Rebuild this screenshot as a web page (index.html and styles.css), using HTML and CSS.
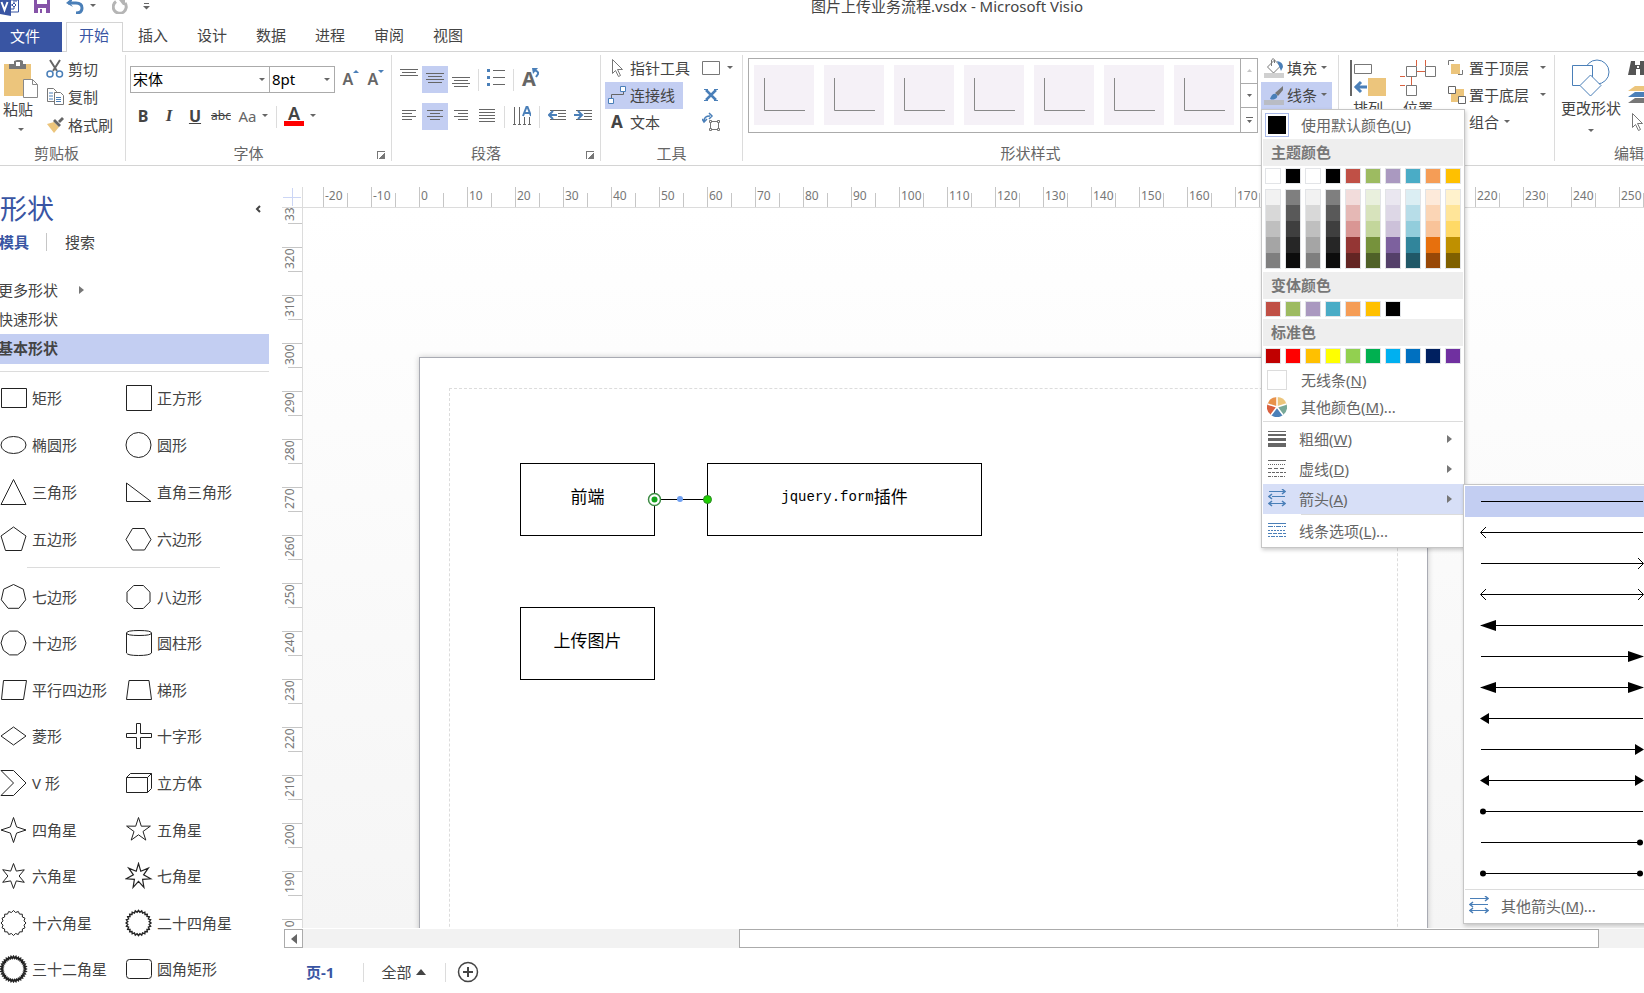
FILE: index.html
```
<!DOCTYPE html>
<html lang="zh-CN">
<head>
    <meta charset="UTF-8">
    <meta name="viewport" content="width=device-width, initial-scale=1.0">
    <title>图片上传业务流程.vsdx - Microsoft Visio</title>
    <link rel="stylesheet" href="styles.css">
</head>
<body>
    <header class="titlebar">
        <svg class="app-logo" width="20" height="16" viewBox="0 0 20 16">
            <path d="M8 0h10.5v12H8" fill="#fff" stroke="#3955a3"/>
            <path d="M12 5l2-2 2 2-2 2zM14 0v3M12 5h-2M14 7v2h-3M15 1h2" fill="none" stroke="#3955a3"/>
            <path d="M0 0h11v16L0 14z" fill="#3955a3"/>
            <path d="M1.500 2l3 8 3-8" fill="none" stroke="#fff" stroke-width="2"/>
        </svg>
        <button class="qat save" aria-label="保存">
            <svg width="16" height="14" viewBox="0 0 16 14"><path d="M0 0h16v13H0z" fill="#8653a8"/><path d="M3 0h10v4H3zM4 8h8v5H4z" fill="#fff"/><path d="M6 9h2v4H6z" fill="#8653a8"/></svg>
        </button>
        <button class="qat undo" aria-label="撤消">
            <svg width="18" height="14" viewBox="0 0 18 14"><path d="M2 3h8q6 0 6 5t-6 5" fill="none" stroke="#4a7fb8" stroke-width="3"/><path d="M0 3l6-5v3L4 3l3 4z" fill="#4a7fb8"/></svg>
            <i class="caret"></i>
        </button>
        <button class="qat redo" aria-label="恢复">
            <svg width="16" height="14" viewBox="0 0 16 14"><path d="M4 1.500A6.500 6.500 0 1 0 13 3" fill="none" stroke="#b5b5b5" stroke-width="3"/><path d="M7 0h6v5h-2z" fill="#b5b5b5"/></svg>
        </button>
        <button class="qat more" aria-label="自定义">
            <svg width="7" height="10" viewBox="0 0 7 10"><path d="M1 3.500h5" stroke="#666"/><path d="M0 6h7L3.500 9.500z" fill="#666"/></svg>
        </button>
        <h1>图片上传业务流程.vsdx - Microsoft Visio</h1>
    </header>

    <nav class="tabs">
        <button class="file-tab">文件</button>
        <button class="tab active">开始</button>
        <button class="tab">插入</button>
        <button class="tab">设计</button>
        <button class="tab">数据</button>
        <button class="tab">进程</button>
        <button class="tab">审阅</button>
        <button class="tab">视图</button>
    </nav>

    <div class="ribbon">
        <!-- 剪贴板 -->
        <section class="group clipboard">
            <div class="group-body">
                <button class="big paste">
                    <svg width="36" height="40" viewBox="0 0 36 40"><path d="M1 5h27v32H1z" fill="#ecc57c"/><path d="M6 5h5V2l3-1h4l2 1v3h3v5H6z" fill="#777"/><path d="M13 3h4v4h-4z" fill="#fff"/><path d="M20.500 20.500h9l5 5v13h-14z" fill="#fff" stroke="#888"/><path d="M29.500 20.500v5h5" fill="none" stroke="#888"/></svg>
                    <span>粘贴</span>
                    <i class="caret"></i>
                </button>
                <div class="rows clip-rows">
                    <button><svg width="18" height="20" viewBox="0 0 18 20"><path d="M4 1l7 11M14 1L7 12" stroke="#666" stroke-width="2"/><g fill="#fff" stroke="#4a7fb8" stroke-width="1.500"><circle cx="4" cy="15" r="3"/><circle cx="13.500" cy="15" r="3"/></g></svg>剪切</button>
                    <button><svg width="18" height="20" viewBox="0 0 18 20"><path d="M1.500 1.500h6l3 3v10h-9z" fill="#fff" stroke="#777"/><path d="M3 6h4M3 9h4M3 12h4" stroke="#4a7fb8"/><path d="M8.500 5.500h6l3 3v9h-9z" fill="#fff" stroke="#777"/><path d="M10 10.500h5M10 12.500h5M10 14.500h5" stroke="#4a7fb8"/></svg>复制</button>
                    <button><svg width="18" height="20" viewBox="0 0 18 20"><path d="M1 9l7-2 5 5-5 6z" fill="#ecc57c"/><path d="M7 6l2-2 6 6-2 2zM12 6l4-4 2 2-4 4z" fill="#666"/></svg>格式刷</button>
                </div>
            </div>
            <h2>剪贴板</h2>
        </section>

        <!-- 字体 -->
        <section class="group font launch">
            <div class="group-body stacked">
                <div class="line">
                    <label class="combo font-name"><select aria-label="字体"><option>宋体</option></select><i class="caret"></i></label>
                    <label class="combo font-size"><select aria-label="字号"><option>8pt</option></select><i class="caret"></i></label>
                    <button class="tool grow" aria-label="增大字号"><span>A</span><svg width="6" height="4" viewBox="0 0 6 4"><path d="M0 3l3-3 3 3z" fill="#4a7fb8"/></svg></button>
                    <button class="tool grow" aria-label="减小字号"><span>A</span><svg width="6" height="4" viewBox="0 0 6 4"><path d="M0 0l3 3 3-3z" fill="#4a7fb8"/></svg></button>
                </div>
                <div class="line">
                    <button class="tool bold">B</button>
                    <button class="tool italic">I</button>
                    <button class="tool underline">U</button>
                    <button class="tool strike">abc</button>
                    <button class="tool case">Aa<i class="caret"></i></button>
                    <i class="sep"></i>
                    <button class="tool color"><span>A</span></button>
                    <button class="drop" aria-label="字体颜色"><i class="caret"></i></button>
                </div>
            </div>
            <h2>字体</h2>
        </section>

        <!-- 段落 -->
        <section class="group para launch">
            <div class="group-body stacked">
                <div class="line">
                    <button class="tool" aria-label="顶端对齐"><svg width="18" height="20" viewBox="0 0 18 20"><path d="M0 .5h18M2 3.500h14M0 6.500h18" stroke="#666"/></svg></button>
                    <button class="tool on" aria-label="垂直居中"><svg width="18" height="20" viewBox="0 0 18 20"><path d="M0 4.500h18M2 7.500h14M0 10.500h18M2 13.500h14" stroke="#666"/></svg></button>
                    <button class="tool" aria-label="底端对齐"><svg width="18" height="20" viewBox="0 0 18 20"><path d="M0 8.500h18M2 11.500h14M0 14.500h18M2 17.500h14" stroke="#666"/></svg></button>
                    <i class="sep"></i>
                    <button class="tool" aria-label="项目符号"><svg width="18" height="20" viewBox="0 0 18 20"><path d="M6 1.500h12M6 8.500h12M6 15.500h12" stroke="#666"/><path d="M0 0h3v3H0zM0 7h3v3H0zM0 14h3v3H0z" fill="#4a7fb8"/></svg></button>
                    <i class="sep"></i>
                    <button class="tool turn" aria-label="旋转文本"><span>A</span><svg width="8" height="11" viewBox="0 0 8 11"><path d="M1 2q6 1 5 4L4 9" fill="none" stroke="#4a7fb8" stroke-width="2"/><path d="M0 0h6L1 6z" fill="#4a7fb8"/></svg></button>
                </div>
                <div class="line">
                    <button class="tool" aria-label="左对齐"><svg width="14" height="14" viewBox="0 0 14 14"><path d="M0 1.500h14M0 4.500h10M0 7.500h14M0 10.500h10" stroke="#666"/></svg></button>
                    <button class="tool on" aria-label="居中"><svg width="16" height="14" viewBox="0 0 16 14"><path d="M0 1.500h16M3 4.500h10M0 7.500h16M3 10.500h10" stroke="#666"/></svg></button>
                    <button class="tool" aria-label="右对齐"><svg width="14" height="14" viewBox="0 0 14 14"><path d="M0 1.500h14M4 4.500h10M0 7.500h14M4 10.500h10" stroke="#666"/></svg></button>
                    <button class="tool" aria-label="两端对齐"><svg width="16" height="16" viewBox="0 0 16 16"><path d="M0 1.500h16M0 4.500h16M0 7.500h16M0 10.500h16M0 13.500h16" stroke="#666"/></svg></button>
                    <i class="sep"></i>
                    <button class="tool" aria-label="文字方向"><svg width="18" height="20" viewBox="0 0 18 20"><path d="M1.500 1v18M6.500 1v18M11.500 11v8M16.500 11v8M0 18.500h3M5 18.500h3M10 18.500h3M15 18.500h3" stroke="#666"/><path d="M10 10l3.500-9h1L18 10M12 7h5" fill="none" stroke="#4a7fb8" stroke-width="2"/></svg></button>
                    <i class="sep"></i>
                    <button class="tool" aria-label="减少缩进"><svg width="18" height="14" viewBox="0 0 18 14"><path d="M2 1.500h16M10 4.500h8M10 7.500h8M2 10.500h16" stroke="#666"/><path d="M2 6h7M5 2L1 6l4 4" fill="none" stroke="#4a7fb8" stroke-width="2"/></svg></button>
                    <button class="tool" aria-label="增加缩进"><svg width="18" height="14" viewBox="0 0 18 14"><path d="M2 1.500h16M10 4.500h8M10 7.500h8M2 10.500h16" stroke="#666"/><path d="M0 6h7M4 2l4 4-4 4" fill="none" stroke="#4a7fb8" stroke-width="2"/></svg></button>
                </div>
            </div>
            <h2>段落</h2>
        </section>

        <!-- 工具 -->
        <section class="group tools">
            <div class="group-body">
                <div class="rows tool-rows">
                    <button><svg width="18" height="20" viewBox="0 0 18 20"><path d="M4.500 1.500v14l3-3 3 6 2-1-3-6h5z" fill="#fff" stroke="#777"/></svg>指针工具</button>
                    <button class="on"><svg width="18" height="20" viewBox="0 0 18 20"><path d="M3.500 13V9.500h12V6" fill="none" stroke="#666"/><path d="M.5 13.500h5v5h-5zM12.500 1.500h5v5h-5z" fill="#fff" stroke="#4a7fb8"/></svg>连接线</button>
                    <button><b>A</b>文本</button>
                </div>
                <div class="rows side-rows">
                    <button aria-label="矩形"><svg width="18" height="14" viewBox="0 0 18 14"><path d="M.5.5h17v13H.5z" fill="#fff" stroke="#777"/></svg><i class="caret"></i></button>
                    <button aria-label="连接点"><svg width="18" height="14" viewBox="0 0 18 14"><path d="M4 2l10 10M14 2L4 12" stroke="#4a7fb8" stroke-width="2.500"/><path d="M2 1.500h4M12 1.500h4M2 12.500h4M12 12.500h4" stroke="#4a7fb8"/></svg></button>
                    <button aria-label="文本块"><svg width="18" height="20" viewBox="0 0 18 20"><path d="M8.500 9.500h8v8h-8z" fill="none" stroke="#777"/><path d="M7.500 8.500h2v2h-2zM15.500 8.500h2v2h-2zM7.500 16.500h2v2h-2zM15.500 16.500h2v2h-2z" fill="#fff" stroke="#777"/><path d="M2 9q0-5 6-5M0 7l2 3 3-3M7 1l3 3-3 3" fill="none" stroke="#4a7fb8" stroke-width="1.500"/></svg></button>
                </div>
            </div>
            <h2>工具</h2>
        </section>

        <!-- 形状样式 -->
        <section class="group styles">
            <div class="group-body">
                <div class="gallery">
                    <div class="gallery-items" id="gallery"></div>
                    <div class="gallery-nav">
                        <button disabled aria-label="上一行"><svg width="5" height="3" viewBox="0 0 5 3"><path d="M0 3h5L2.500 0z"/></svg></button>
                        <button aria-label="下一行"><svg width="5" height="3" viewBox="0 0 5 3"><path d="M0 0h5L2.500 3z"/></svg></button>
                        <button aria-label="其他"><svg width="7" height="6" viewBox="0 0 7 6"><path d="M0 0h7v1H0zM1 3h5L3.500 6z"/></svg></button>
                    </div>
                </div>
                <div class="rows style-rows">
                    <button><svg width="20" height="20" viewBox="0 0 20 20"><path d="M0 15h20v5H0z" fill="#d0d0d0"/><path d="M3.500 9l7-7 6 6-7 7z" fill="#fff" stroke="#777"/><path d="M7.500 8V2q2-3 3 0v3" fill="none" stroke="#777"/><path d="M13 3q6 1 6 6l-2 4z" fill="#4a7fb8"/></svg>填充<i class="caret"></i></button>
                    <div class="menu-anchor">
                        <button class="on"><svg width="20" height="20" viewBox="0 0 20 20"><path d="M0 15h20v5H0z" fill="#b9bcc4"/><path d="M11 8l8-7v4l-5 6z" fill="#777"/><path d="M6 14q2-6 6-5 3 3-1 5-3 1-5 0z" fill="#4a7fb8"/></svg>线条<i class="caret"></i></button>
                        <div class="menu">
                            <button class="menu-item default-color"><span class="current"></span><span>使用默认颜色(<u>U</u>)</span></button>
                            <h3>主题颜色</h3>
                            <div class="swatches" id="theme-colors"></div>
                            <div class="swatches shades" id="theme-shades"></div>
                            <h3>变体颜色</h3>
                            <div class="swatches" id="variant-colors"></div>
                            <h3>标准色</h3>
                            <div class="swatches" id="standard-colors"></div>
                            <button class="menu-item no-line"><span class="blank"></span><span>无线条(<u>N</u>)</span></button>
                            <button class="menu-item more-colors"><svg width="20" height="20" viewBox="0 0 20 20"><path d="M10 10V0A10 10 0 0 0 .5 7z" fill="#e8924a"/><path d="M10 10V0a10 10 0 0 1 9.500 7z" fill="#ecc57c"/><path d="M10 10l9.500-3A10 10 0 0 1 16 18z" fill="#78a898"/><path d="M10 10l6 8a10 10 0 0 1-12 0z" fill="#4a7fb8"/><path d="M10 10L.5 7A10 10 0 0 0 4 18z" fill="#d9603f"/><path d="M10 10V0M10 10l9.500-3M10 10l6 8M10 10l-6 8M10 10L.5 7" stroke="#fff" stroke-width="1.500"/></svg><span>其他颜色(<u>M</u>)...</span></button>
                            <hr>
                            <button class="menu-item sub"><svg width="18" height="18" viewBox="0 0 18 18"><path d="M0 1h18v1H0zM0 4h18v2H0zM0 8h18v3H0zM0 13h18v4H0z" fill="#666"/></svg><span>粗细(<u>W</u>)</span><i class="right"></i></button>
                            <button class="menu-item sub"><svg width="18" height="18" viewBox="0 0 18 18"><g stroke="#666"><path d="M0 .5h18"/><path d="M0 4.500h18" stroke-dasharray="1 1"/><path d="M0 8.500h18" stroke-dasharray="4 2"/><path d="M0 12.500h18" stroke-dasharray="3 1"/><path d="M0 16.500h18" stroke-dasharray="3 1 1 1"/></g></svg><span>虚线(<u>D</u>)</span><i class="right"></i></button>
                            <div class="sub-anchor">
                                <button class="menu-item sub active"><svg width="18" height="20" viewBox="0 0 18 20"><path d="M1 2.500h16M4 7.500h13M1 14.500h16" stroke="#4a7fb8" stroke-width="1.200"/><path d="M14 0l3 2.500L14 5M4 5L1 7.500 4 10M4 12l-3 2.500L4 17M14 12l3 2.500-3 2.500" fill="none" stroke="#4a7fb8" stroke-width="1.500"/></svg><span>箭头(<u>A</u>)</span><i class="right"></i></button>
                                <div class="submenu">
                                    <div id="arrow-list"></div>
                                    <hr>
                                    <button class="menu-item more-arrows"><svg width="20" height="20" viewBox="0 0 20 20"><path d="M1 2.500h18M1 8.500h18M1 14.500h18" stroke="#4a7fb8" stroke-width="1.200"/><path d="M16 0l3 2.500L16 5M4 6L1 8.500 4 11M4 12l-3 2.500L4 17M16 12l3 2.500-3 2.500" fill="none" stroke="#4a7fb8" stroke-width="1.500"/></svg><span>其他箭头(<u>M</u>)...</span></button>
                                </div>
                            </div>
                            <hr class="indent">
                            <button class="menu-item sub"><svg width="18" height="18" viewBox="0 0 18 18"><g stroke="#4a7fb8"><path d="M0 1.500h18"/><path d="M0 4.500h18" stroke-dasharray="5 1 1 1"/><path d="M0 8.500h18" stroke-dasharray="2 1"/><path d="M0 11.500h18" stroke-dasharray="4 1"/><path d="M0 14.500h18" stroke-dasharray="2 1 4 1"/></g></svg><span>线条选项(<u>L</u>)...</span></button>
                        </div>
                    </div>
                </div>
            </div>
            <h2>形状样式</h2>
        </section>

        <!-- 排列 -->
        <section class="group arrange">
            <div class="group-body">
                <button class="big">
                    <svg width="36" height="38" viewBox="0 0 36 38"><path d="M0 1h2v36H0z" fill="#666"/><path d="M4.500 5.500h17v9h-17z" fill="#fff" stroke="#777"/><path d="M18 19h18v18H18z" fill="#ecc57c"/><path d="M5 28h12M11 23l-5 5 5 5" fill="none" stroke="#4a7fb8" stroke-width="3"/></svg>
                    <span>排列</span>
                </button>
                <button class="big">
                    <svg width="36" height="38" viewBox="0 0 36 38"><path d="M16.500 1v6M25.500 1v6M17 12.500h9M11.500 18v9M0 17.500h5M0 26.500h5" stroke="#d9603f"/><path d="M6.500 7.500h10v10h-10zM25.500 7.500h10v10h-10zM6.500 26.500h10v10h-10z" fill="#fff" stroke="#777"/></svg>
                    <span>位置</span>
                </button>
                <div class="rows order-rows">
                    <button><svg width="18" height="20" viewBox="0 0 18 20"><path d="M3 6h9v10H3z" fill="#ecc57c"/><path d="M.5 7V2.500H6M10 16.500h4.500V12" fill="none" stroke="#777"/></svg>置于顶层<i class="caret"></i></button>
                    <button><svg width="18" height="20" viewBox="0 0 18 20"><path d="M3 4h13v13H3z" fill="#ecc57c"/><path d="M.5 1.500h7v7h-7zM10.500 11.500h7v7h-7z" fill="#fff" stroke="#666"/></svg>置于底层<i class="caret"></i></button>
                    <button class="combine">组合<i class="caret"></i></button>
                </div>
            </div>
            <h2></h2>
        </section>

        <!-- 编辑 -->
        <section class="group edit">
            <div class="group-body">
                <button class="big change">
                    <svg width="38" height="38" viewBox="0 0 38 38"><g fill="#fff" stroke="#4a7fb8"><circle cx="25" cy="13" r="12"/><path d="M.5 6.500h20v20H.5z"/><path d="M18.500 16l10.500 10.500L18.500 37 8 26.500z"/></g></svg>
                    <span>更改形状</span>
                    <i class="caret"></i>
                </button>
                <div class="rows edit-rows">
                    <button aria-label="查找"><svg width="20" height="20" viewBox="0 0 20 20"><path d="M3 3h4v4h5V3h4l3 14h-7v-6H8v6H0z" fill="#555"/><path d="M9 8h2v2H9z" fill="#fff"/></svg></button>
                    <button aria-label="图层"><svg width="20" height="20" viewBox="0 0 20 20"><path d="M7 1h15l-6 5H0z" fill="#ecc57c"/><path d="M7 7h15l-6 5H0z" fill="#4a7fb8"/><path d="M7 13h15l-6 5H0z" fill="#777"/></svg></button>
                    <button aria-label="选择"><svg width="20" height="20" viewBox="0 0 20 20"><path d="M4.500 1.500v14l3-3 3 6 2-1-3-6h5z" fill="#fff" stroke="#777"/></svg></button>
                </div>
            </div>
            <h2>编辑</h2>
        </section>
    </div>

    <main class="main">
        <aside class="sidebar">
            <div class="side-title">
                <h2>形状</h2>
                <button aria-label="折叠"><svg width="6" height="8" viewBox="0 0 6 8"><path d="M5 1L2 4l3 3" fill="none" stroke="#444" stroke-width="2"/></svg></button>
            </div>
            <div class="side-tabs">
                <button class="active">模具</button>
                <button>搜索</button>
            </div>
            <div class="stencils">
                <button>更多形状<i class="right"></i></button>
                <button>快速形状</button>
                <button class="active">基本形状</button>
            </div>
            <hr>
            <div class="shapes" id="shapes-common"></div>
            <hr class="short">
            <div class="shapes fill" id="shapes-more"></div>
        </aside>

        <section class="workspace">
            <div class="corner"><svg width="18" height="18" viewBox="0 0 18 18"><path d="M0 9.500h18M9.500 0v18" stroke="#ccd6f5"/></svg></div>
            <div class="ruler-h" id="ruler-h"></div>
            <div class="ruler-v" id="ruler-v"></div>
            <div class="canvas">
                <div class="page">
                    <div class="page-margin"></div>
                    <div class="node front">前端</div>
                    <div class="node plugin"><span>jquery.form</span>插件</div>
                    <div class="node upload">上传图片</div>
                    <svg class="connector" width="80" height="28" viewBox="0 0 80 28">
                        <path d="M14 14.500h54" stroke="#000"/>
                        <circle cx="14.500" cy="14.500" r="6" fill="#fff" stroke="#3d8b44" stroke-width="1.500"/>
                        <circle cx="14.500" cy="14.500" r="3" fill="#13a51c"/>
                        <circle cx="40" cy="14" r="3" fill="#6f9ff0"/>
                        <circle cx="67.500" cy="14.500" r="4" fill="#1fd000" stroke="#2f8a2a"/>
                    </svg>
                </div>
            </div>
            <div class="scrollbar">
                <button aria-label="向左滚动"><svg width="6" height="10" viewBox="0 0 6 10"><path d="M6 0v10L0 5z" fill="#666"/></svg></button>
                <div class="track"><div class="thumb"></div></div>
            </div>
            <div class="page-tabs">
                <button class="active">页-1</button>
                <button class="all">全部<svg width="10" height="6" viewBox="0 0 10 6"><path d="M0 6h10L5 0z" fill="#444"/></svg></button>
                <button class="add" aria-label="插入页"><svg width="22" height="22" viewBox="0 0 22 22"><circle cx="11" cy="11" r="9.500" fill="none" stroke="#444" stroke-width="1.500"/><path d="M6 11h10M11 6v10" stroke="#444" stroke-width="2"/></svg></button>
            </div>
        </section>
    </main>

    <script>
        const byId = (id) => document.getElementById(id);

        // 主题样式库
        byId('gallery').innerHTML = Array(7).fill(
            '<button aria-label="样式"><svg width="60" height="60" viewBox="0 0 60 60"><path d="M10.500 13v32.500H51" fill="none" stroke="#888"/></svg></button>'
        ).join('');

        // 调色板
        const swatches = (colors) => colors.map((c) =>
            `<button aria-label="${c}" style="background-color: ${c}"></button>`).join('');

        byId('theme-colors').innerHTML = swatches(['#ffffff', '#000000', '#ffffff', '#000000', '#c05046', '#9dbb61', '#aa99c0', '#4aacc6', '#f59d56', '#ffc000']);
        byId('variant-colors').innerHTML = swatches(['#c05046', '#9dbb61', '#aa99c0', '#4aacc6', '#f59d56', '#ffc000', '#000000']);
        byId('standard-colors').innerHTML = swatches(['#c00000', '#ff0000', '#ffc000', '#ffff00', '#92d050', '#00b050', '#00b0f0', '#0070c0', '#002060', '#7030a0']);

        const light = ['#f2f2f2', '#d8d8d8', '#bfbfbf', '#a5a5a5', '#7f7f7f'];
        const dark = ['#7f7f7f', '#595959', '#3f3f3f', '#262626', '#0c0c0c'];
        const shades = [
            light, dark, light, dark,
            ['#f2dcdb', '#e5b8b5', '#d99694', '#943634', '#632523'],
            ['#e9f0dd', '#d7e3bc', '#c3d69b', '#76923c', '#4f6128'],
            ['#eae7f0', '#ddd7e6', '#ccc1d9', '#7d619e', '#54406a'],
            ['#dbeef3', '#b7dde8', '#92cddc', '#31859b', '#205867'],
            ['#fdeada', '#fbd5b5', '#f9c399', '#e7700d', '#984807'],
            ['#fff2cc', '#ffe599', '#ffd966', '#bf9000', '#7f6000']
        ];
        byId('theme-shades').innerHTML = shades.map((col) => `<div>${swatches(col)}</div>`).join('');

        // 箭头列表：[左端, 右端]
        const heads = {
            open: ['M6 10l-5.500 5.500L6 21', 'M158 10l5.500 5.500-5.500 5.500'],
            long: ['M0 15.500l16-5.500v11z', 'M164 15.500L148 10v11z'],
            short: ['M0 15.500l9-5.500v11z', 'M164 15.500L155 10v11z'],
            dot: ['M0 15.500a3 3 0 1 0 6 0a3 3 0 1 0-6 0', 'M157 15.500a3 3 0 1 0 6 0a3 3 0 1 0-6 0']
        };
        const arrows = [['', '']];
        Object.keys(heads).forEach((k) => arrows.push([k, ''], ['', k], [k, k]));
        byId('arrow-list').innerHTML = arrows.map((ends, i) => {
            const tips = ends.map((k, side) => k
                ? `<path d="${heads[k][side]}" fill="${k === 'open' ? 'none' : '#000'}" stroke="${k === 'open' ? '#000' : 'none'}"/>`
                : '').join('');
            return `<button class="arrow${i === 0 ? ' active' : ''}" aria-label="箭头 ${i}"><svg width="164" height="31" viewBox="0 0 164 31"><path d="M1 15.500h162" stroke="#000"/>${tips}</svg></button>`;
        }).join('');

        // 标尺
        let marks = '';
        for (let n = -30; n <= 250; n += 10) marks += `<span class="mark">${n}</span>`;
        byId('ruler-h').innerHTML = marks;
        marks = '';
        for (let n = 330; n >= 180; n -= 10) marks += `<span class="mark"><b>${n}</b></span>`;
        byId('ruler-v').innerHTML = marks;

        // 形状图标
        const ring = (n, inner, turn = 0, width = 1) => {
            const count = inner ? n * 2 : n;
            const pts = [];
            for (let i = 0; i < count; i++) {
                const r = inner && i % 2 ? 12.5 * inner : 12.5;
                const a = (i / count) * Math.PI * 2 - Math.PI / 2 + turn;
                pts.push((13.5 + r * Math.cos(a)).toFixed(1) + ',' + (14 + r * Math.sin(a)).toFixed(1));
            }
            return `<polygon points="${pts.join(' ')}" stroke-width="${width}"/>`;
        };
        const path = (d) => `<path d="${d}"/>`;

        const common = [
            ['矩形', path('M1.500 4.500h25v19h-25z')],
            ['正方形', path('M1.500 1.500h25v25h-25z')],
            ['椭圆形', '<ellipse cx="13.500" cy="14" rx="12.500" ry="8.500"/>'],
            ['圆形', '<circle cx="13.500" cy="14" r="12.500"/>'],
            ['三角形', path('M13.500 1.500L26 26.500H1z')],
            ['直角三角形', path('M1.500 5v18.500H26z')],
            ['五边形', path('M13.500 2L26 11l-4.500 14.500h-16L1 11z')],
            ['六边形', path('M7.500 3.500h12l6.500 11-6.500 10.500h-12L1 14.500z')]
        ];
        const more = [
            ['七边形', ring(7)],
            ['八边形', ring(8, 0, Math.PI / 8)],
            ['十边形', ring(10, 0, Math.PI / 10)],
            ['圆柱形', path('M1.500 4v20q1 2.500 12 2.500t13-2.500V4M1.500 4q0-2.500 12.500-2.500T26.500 4 14 6.500 1.500 4')],
            ['平行四边形', path('M3.500 4.500h23l-3 19h-22z')],
            ['梯形', path('M4 4.500h20l2.500 19h-25z')],
            ['菱形', path('M13.500 5L26 14l-12.500 9L1 14z')],
            ['十字形', path('M11.500 1.500h4v10h11v4h-11v11h-4v-11h-10v-4h10z')],
            ['V 形', path('M1 1.500h12.500L26 14 13.500 26.500H1L13.500 14z')],
            ['立方体', path('M1.500 8.500h21v15h-21zM1.500 8.500l4-4h21l-4 4M26.500 4.500v15l-4 4')],
            ['四角星', ring(4, 0.35)],
            ['五角星', ring(5, 0.38)],
            ['六角星', ring(6, 0.45)],
            ['七角星', ring(7, 0.42, 0, 1.2)],
            ['十六角星', ring(16, 0.86)],
            ['二十四角星', ring(24, 0.86, 0, 1.4)],
            ['三十二角星', ring(32, 0.86, 0, 1.8)],
            ['圆角矩形', '<rect x="1.500" y="4.500" width="25" height="19" rx="3"/>']
        ];
        const drawShapes = (list) => list.map(([name, icon]) =>
            `<button><svg width="28" height="28" viewBox="0 0 28 28">${icon}</svg>${name}</button>`).join('');
        byId('shapes-common').innerHTML = drawShapes(common);
        byId('shapes-more').innerHTML = drawShapes(more);
    </script>
</body>
</html>
```

FILE: styles.css
```
* {
    box-sizing: border-box;
}

body {
    margin: 0;
    height: 100vh;
    display: flex;
    flex-direction: column;
    overflow: hidden;
    background-color: #fff;
    color: #444;
    font-family: "Noto Sans", "Noto Sans CJK SC", sans-serif;
    font-size: 15px;
    line-height: 20px;
}

button {
    display: flex;
    align-items: center;
    margin: 0;
    padding: 0;
    border: none;
    background: none;
    color: inherit;
    font: inherit;
    white-space: nowrap;
}

svg {
    display: block;
    flex: none;
}

h1, h2, h3 {
    margin: 0;
    font-weight: 400;
}

hr {
    margin: 0;
    border: none;
    border-top: 1px solid #dcdcdc;
}

.caret {
    flex: none;
    border: 3px solid transparent;
    border-top-color: #666;
    border-bottom: none;
}

.right {
    flex: none;
    border: 4px solid transparent;
    border-left: 5px solid #777;
    border-right: none;
}

.on {
    background-color: #c3cef2;
}

/* 标题栏 */
.titlebar {
    display: flex;
    align-items: flex-start;
    height: 22px;
}

.titlebar h1 {
    flex: 1;
    padding-left: 100px;
    text-align: center;
    font-size: 15px;
    line-height: 12px;
}

.qat {
    align-items: flex-start;
}

.save {
    margin-left: 14px;
}

.undo {
    margin-left: 16px;
    gap: 6px;
}

.undo .caret {
    margin-top: 4px;
}

.redo {
    margin-left: 16px;
}

.more {
    margin-left: 15px;
}

/* 选项卡 */
.tabs {
    display: flex;
    height: 30px;
    border-bottom: 1px solid #d4d4d4;
}

.file-tab {
    height: 30px;
    margin-right: 4px;
    padding: 0 22px 2px 10px;
    background-color: #3955a3;
    color: #fff;
}

.tab {
    height: 29px;
    padding: 0 14px 3px 15px;
}

.tab.active {
    height: 30px;
    padding: 0 13px 5px 12px;
    border: 1px solid #d4d4d4;
    border-bottom: none;
    background-color: #fff;
    color: #3955a3;
}

/* 功能区 */
.ribbon {
    display: flex;
    height: 114px;
    padding: 3px 0 4px;
    border-bottom: 1px solid #d4d4d4;
}

.group {
    flex: none;
    display: flex;
    flex-direction: column;
    border-right: 1px solid #dcdcdc;
}

.group h2 {
    position: relative;
    height: 15px;
    text-align: center;
    font-size: 15px;
    line-height: 14px;
    color: #666;
}

.launch h2,
.styles h2 {
    padding-right: 20px;
}

.launch h2::after {
    content: "";
    position: absolute;
    right: 6px;
    bottom: 2px;
    width: 7px;
    height: 7px;
    border: 1px solid #777;
    border-right: none;
    border-bottom: none;
    background: linear-gradient(135deg, transparent 55%, #777 55%);
}

.group-body {
    flex: 1;
    display: flex;
    align-items: flex-start;
}

.group-body.stacked {
    flex-direction: column;
    gap: 10px;
    padding: 11px 4px 0;
}

.line {
    display: flex;
    align-items: center;
    height: 27px;
}

.rows {
    display: flex;
    flex-direction: column;
}

.rows button {
    height: 27px;
    padding-bottom: 2px;
}

.big {
    flex-direction: column;
    padding-top: 4px;
}

.big > span {
    line-height: 20px;
}

.big .caret {
    margin-top: 9px;
}

.sep {
    width: 1px;
    height: 22px;
    margin: 0 4px;
    background-color: #dcdcdc;
}

.tool {
    justify-content: center;
    width: 26px;
    height: 27px;
    padding-bottom: 2px;
}

.clipboard {
    width: 126px;
}

.clipboard h2 {
    padding-right: 12px;
}

.paste {
    padding-left: 3px;
}

.paste > span {
    align-self: flex-start;
}

.clip-rows {
    padding: 1px 0 0 7px;
}

.clip-rows button {
    height: 28px;
    gap: 4px;
}

.font {
    width: 266px;
}

.combo {
    position: relative;
    height: 27px;
}

.combo select {
    width: 100%;
    height: 27px;
    padding: 0 2px 2px;
    appearance: none;
    border: 1px solid #ababab;
    border-radius: 0;
    background-color: #fff;
    color: #000;
    font: inherit;
}

.combo .caret {
    position: absolute;
    right: 5px;
    top: 12px;
}

.font-name {
    width: 140px;
}

.font-size {
    width: 66px;
    margin-left: -1px;
}

.grow {
    margin-left: -1px;
    font-size: 16px;
    font-weight: 600;
    color: #666;
}

.grow svg {
    margin-bottom: 14px;
}

.font-size + .grow {
    margin-left: 3px;
}

.bold {
    font-size: 16px;
    font-weight: 700;
}

.italic {
    font-family: "Liberation Serif", serif;
    font-size: 17px;
    font-style: italic;
    font-weight: 700;
}

.underline {
    font-size: 16px;
    font-weight: 700;
    text-decoration: underline;
}

.strike {
    font-size: 12px;
    text-decoration: line-through;
}

.tool.case {
    width: 38px;
    gap: 5px;
    color: #666;
}

.color span {
    width: 20px;
    height: 20px;
    border-bottom: 5px solid #f00;
    font-size: 18px;
    font-weight: 600;
    line-height: 14px;
}

.drop {
    height: 27px;
    padding: 0 3px 2px;
}

.para {
    width: 209px;
}

.turn {
    font-size: 20px;
    font-weight: 700;
    color: #666;
}

.turn svg {
    margin: 0 0 10px -4px;
}

.tools {
    width: 142px;
}

.tool-rows {
    flex: none;
    width: 78px;
    margin-left: 4px;
}

.tool-rows button {
    gap: 4px;
    padding-left: 3px;
}

.tool-rows b {
    width: 18px;
    font-size: 17px;
}

.side-rows {
    padding-left: 19px;
}

.side-rows button {
    gap: 7px;
}

.styles {
    flex: 1;
    min-width: 0;
}

/* 样式库 */
.gallery {
    flex: 1;
    display: flex;
    height: 75px;
    margin: 3px 3px 0 5px;
    border: 1px solid #ababab;
    min-width: 0;
}

.gallery-items {
    flex: 1;
    display: flex;
    gap: 10px;
    padding: 6px 5px;
    overflow: hidden;
}

.gallery-items button {
    height: 60px;
    background-color: #f5f1f7;
}

.gallery-nav {
    display: flex;
    flex-direction: column;
    width: 17px;
    border-left: 1px solid #ababab;
}

.gallery-nav button {
    flex: 1;
    justify-content: center;
    fill: #666;
}

.gallery-nav button + button {
    border-top: 1px solid #ababab;
}

.gallery-nav button:disabled {
    fill: #c6c6c6;
}

.style-rows {
    flex: none;
    margin-right: 6px;
}

.style-rows > button,
.menu-anchor > button {
    width: 71px;
    padding-left: 3px;
    gap: 3px;
}

.style-rows .caret {
    margin-left: 1px;
}

.menu-anchor {
    position: relative;
}

/* 颜色菜单 */
.menu,
.submenu {
    position: absolute;
    z-index: 10;
    padding: 1px;
    border: 1px solid #c6c6c6;
    background-color: #fff;
    box-shadow: 1px 2px 4px rgba(0, 0, 0, 0.2);
}

.menu {
    top: 100%;
    left: 0;
    width: 204px;
    color: #666;
}

.menu h3 {
    margin-bottom: 2px;
    padding-left: 8px;
    background-color: #eee;
    font-size: 15px;
    font-weight: 700;
    line-height: 27px;
    color: #777;
}

.menu .menu-item {
    width: 100%;
    height: 27px;
    padding: 0 0 0 4px;
    gap: 14px;
}

.menu .sub {
    height: 30px;
    gap: 13px;
    padding-left: 5px;
}

.menu .sub .right {
    margin: 0 11px 0 auto;
}

.menu .default-color {
    height: 28px;
    padding-left: 2px;
    gap: 12px;
}

.current {
    width: 24px;
    height: 24px;
    padding: 2px;
    border: 1px solid #a9b9e8;
    background: #000 content-box;
}

.more-colors + hr {
    margin-bottom: 2px;
}

.blank {
    width: 20px;
    height: 20px;
    border: 1px solid #dcdcdc;
}

.more-colors {
    margin-bottom: 1px;
}

.menu .sub.active {
    background-color: #d7dff7;
}

.indent {
    margin: 0 0 1px 38px;
}

.swatches {
    display: flex;
    gap: 4px;
    padding: 0 2px 2px;
}

.menu .swatches button {
    width: 16px;
    height: 16px;
    border: 1px solid #e2e4e7;
}

.shades {
    padding: 3px 2px;
}

.menu .shades button {
    border-width: 0 1px;
}

.menu .shades button:first-child {
    border-top-width: 1px;
}

.menu .shades button:last-child {
    border-bottom-width: 1px;
}

.sub-anchor {
    position: relative;
}

.submenu {
    top: 0;
    left: 100%;
    width: 190px;
}

.menu .arrow {
    width: 100%;
    height: 31px;
    padding: 0 0 0 15px;
}

.arrow.active {
    background-color: #c3cef2;
}

.submenu .menu-item.more-arrows {
    height: 32px;
    gap: 12px;
}

.arrange {
    width: 216px;
}

.arrange .big {
    margin-left: 11px;
}

.arrange .big + .big {
    margin-left: 14px;
}

.order-rows {
    flex: 1;
    padding-left: 12px;
}

.order-rows button {
    gap: 3px;
}

.order-rows .caret {
    margin-left: 8px;
}

.order-rows .combine {
    padding-left: 21px;
}

.order-rows .combine .caret {
    margin-left: 2px;
}

.edit {
    width: 89px;
    border-right: none;
    overflow: hidden;
}

.edit h2 {
    text-align: right;
}

.change {
    padding-left: 6px;
}

.arrange .big > span,
.change > span {
    line-height: 23px;
}

.edit-rows {
    padding-left: 7px;
}

/* 形状窗格 */
.main {
    flex: 1;
    display: flex;
    min-height: 0;
}

.sidebar {
    flex: none;
    display: flex;
    flex-direction: column;
    width: 282px;
    padding: 28px 13px 0 0;
}

.side-title {
    display: flex;
    align-items: center;
    justify-content: space-between;
    padding: 0 8px 2px 0;
}

.side-title h2 {
    font-size: 27px;
    line-height: 30px;
    color: #3955a3;
}

.side-tabs {
    display: flex;
    align-items: center;
    height: 24px;
    margin: 4px 0 22px;
}

.side-tabs .active {
    height: 18px;
    margin-right: 18px;
    padding-right: 17px;
    border-right: 1px solid #c6c6c6;
    text-indent: -1px;
    font-weight: 700;
    color: #3955a3;
}

.stencils {
    margin-bottom: 7px;
}

.stencils button {
    width: 100%;
    height: 29px;
    gap: 21px;
    padding-bottom: 2px;
    text-indent: -2px;
}

.stencils .active {
    height: 30px;
    background-color: #c3cef2;
    font-weight: 700;
}

.shapes {
    display: grid;
    grid-template-columns: 125px 1fr;
    grid-auto-rows: 47px;
    padding-top: 3px;
}

.shapes.fill {
    flex: 1;
    grid-auto-rows: 1fr;
    padding-top: 6px;
    min-height: 0;
}

.shapes button {
    gap: 4px;
    padding-bottom: 1px;
}

.shapes svg {
    fill: #fff;
    stroke: #222;
}

.short {
    margin: 4px 49px 0 27px;
}

/* 绘图区 */
.workspace {
    flex: 1;
    display: grid;
    grid-template-columns: 21px 1fr;
    grid-template-rows: 42px 1fr 20px 45px;
    min-width: 0;
}

.corner,
.ruler-h {
    margin-top: 21px;
    border-bottom: 1px solid #dcdcdc;
}

.corner {
    padding: 1px;
    border-right: 1px solid #dcdcdc;
}

.ruler-h,
.ruler-v {
    display: flex;
    overflow: hidden;
    font-size: 12px;
    color: #777;
}

.ruler-v {
    flex-direction: column;
    border-right: 1px solid #dcdcdc;
}

.mark {
    flex: none;
    width: 48px;
    padding-left: 1px;
    border-left: 1px solid #c6c6c6;
    background: linear-gradient(#c6c6c6, #c6c6c6) 23px 6px / 1px 100% no-repeat;
    line-height: 17px;
}

.ruler-h .mark:first-child {
    margin-left: -28px;
}

.ruler-v .mark {
    width: 20px;
    height: 48px;
    padding: 0;
    border-left: none;
    border-top: 1px solid #c6c6c6;
    background-position: 6px 23px;
    background-size: 100% 1px;
}

.ruler-v .mark:first-child {
    margin-top: -9px;
}

.ruler-v b {
    display: block;
    height: 21px;
    font-weight: 400;
    line-height: 16px;
    writing-mode: vertical-rl;
    transform: rotate(180deg);
}

.canvas {
    position: relative;
    overflow: hidden;
    background: linear-gradient(#fff, #f5f5f5);
}

.page {
    position: absolute;
    left: 116px;
    top: 149px;
    width: 1009px;
    height: 1427px;
    border: 1px solid #a9abb3;
    background-color: #fff;
    box-shadow: 0 0 6px rgba(0, 0, 0, 0.2);
}

.page-margin {
    position: absolute;
    inset: 30px 29px;
    border: 1px dashed #dcdcdc;
}

.node {
    position: absolute;
    left: 100px;
    top: 105px;
    display: flex;
    align-items: center;
    justify-content: center;
    width: 135px;
    height: 73px;
    padding-bottom: 6px;
    border: 1px solid #000;
    background-color: #fff;
    color: #000;
    font-size: 17px;
}

.node.plugin {
    left: 287px;
    width: 275px;
}

.plugin span {
    font-family: "Liberation Mono", monospace;
    font-size: 14px;
}

.node.upload {
    top: 249px;
}

.connector {
    position: absolute;
    left: 220px;
    top: 127px;
}

/* 滚动条 */
.scrollbar {
    grid-column: 1 / 3;
    display: flex;
    padding: 1px 0 0 2px;
}

.scrollbar button {
    justify-content: center;
    width: 19px;
    border: 1px solid #ababab;
}

.track {
    flex: 1;
    padding: 0 45px 0 436px;
    background-color: #f2f2f2;
}

.thumb {
    height: 100%;
    border: 1px solid #ababab;
    background-color: #fff;
}

.page-tabs {
    grid-column: 1 / 3;
    display: flex;
    align-items: center;
    padding: 3px 0 0 24px;
}

.page-tabs button {
    height: 19px;
}

.page-tabs .active {
    padding-right: 29px;
    font-weight: 700;
    color: #3955a3;
}

.page-tabs .all {
    gap: 5px;
    padding: 0 19px 0 17px;
    border: 1px solid #dcdcdc;
    border-width: 0 1px;
}

.page-tabs .add {
    margin-left: 11px;
}
```
